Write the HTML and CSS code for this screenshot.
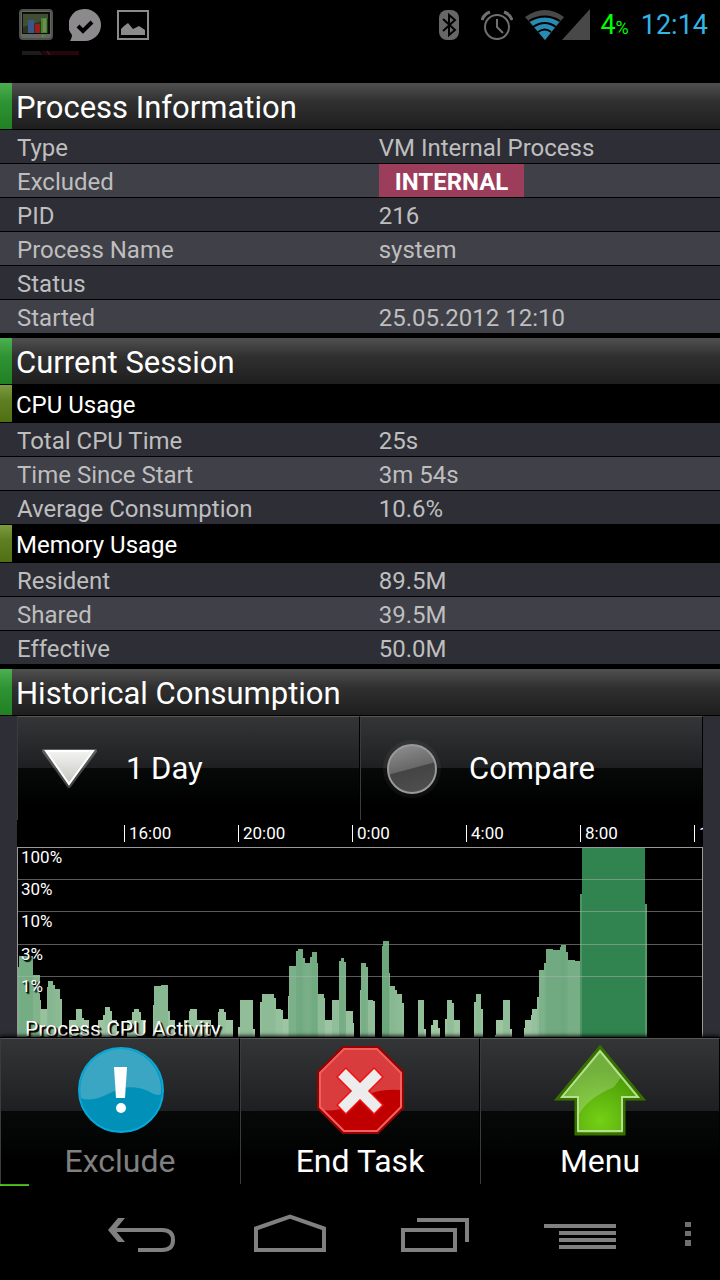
FILE: index.html
```
<!DOCTYPE html>
<html lang="en">
<head>
    <meta charset="UTF-8">
    <meta name="viewport" content="width=device-width, initial-scale=1.0">
    <title>Process Information</title>
    <link rel="stylesheet" href="styles.css">
</head>
<body>

    <header class="status-bar">
        <div class="status-icons">
            <svg width="34" height="32" viewBox="0 0 34 32">
                <rect x="1" y="1" width="32" height="29" rx="3" fill="#646662" stroke="#50524e" stroke-width="2"/>
                <rect x="3" y="3" width="28" height="22" fill="#0c0e0a"/>
                <path d="M4 5h25v19H4z" fill="#2c3424"/>
                <path d="M4 5h25v5L4 18z" fill="#424e34"/>
                <rect x="9" y="11" width="6" height="13" fill="#3a5788"/>
                <rect x="16" y="15" width="5" height="9" fill="#9c1c1c"/>
                <rect x="22" y="9" width="6" height="15" fill="#3f8a30"/>
                <rect x="24" y="10" width="3" height="13" fill="#6d8e50"/>
                <rect x="23" y="26" width="2" height="2" fill="#4f9a20"/>
            </svg>
            <svg width="32" height="32" viewBox="0 0 32 32">
                <path d="M16 0a16 16 0 1 1 0 32H1q2-3 2-6A16 16 0 0 1 16 0z" fill="#8c8a8c"/>
                <path d="M9 17l5 5 9-9" fill="none" stroke="#000" stroke-width="4"/>
            </svg>
            <svg width="32" height="32" viewBox="0 0 32 32">
                <rect x="1" y="2" width="30" height="28" fill="none" stroke="#8c8a8c" stroke-width="2"/>
                <path d="M4 26v-6l3-3 4-3 5 6 6-3 6 4v5z" fill="#8c8a8c"/>
            </svg>
        </div>
        <div class="status-info">
            <svg width="20" height="32" viewBox="0 0 20 32">
                <rect x="0" y="1" width="20" height="30" rx="8" fill="#666866"/>
                <path d="M4 10l12 11-6 5V6l6 5L4 22" fill="none" stroke="#000" stroke-width="2"/>
            </svg>
            <svg width="32" height="32" viewBox="0 0 32 32" fill="none" stroke="#707070" stroke-width="2">
                <circle cx="16" cy="18" r="12"/>
                <path d="M16 10v8l6 6"/>
                <path d="M1 11q2-6 8-8M31 11q-2-6-8-8" stroke-width="3"/>
            </svg>
            <svg width="66" height="32" viewBox="0 0 66 32">
                <path d="M0 8Q20-6 39 8L20 31z" fill="#484848"/>
                <path d="M5 13Q20 4 34 13L20 31z" fill="#268cb6"/>
                <path d="M4 12Q20 3 35 12M8 18Q20 10 31 18M13 23Q20 18 26 23" fill="none" stroke="#000" stroke-width="2"/>
                <path d="M37 31L65 0v31z" fill="#484848"/>
            </svg>
            <span class="battery">4<small>%</small></span>
            <span class="clock">12:14</span>
        </div>
    </header>

    <!-- leftover of the title bar that is sliding out -->
    <div class="title-bar">
        <svg width="58" height="6" viewBox="0 0 58 6">
            <path d="M0 1h18l3 4H0z" fill="#1c1c1c"/>
            <path d="M19 1h38v4H22z" fill="#26060a"/>
            <path d="M25 1l3 4" stroke="#333"/>
        </svg>
    </div>

    <main class="content">
        <section>
            <h2>Process Information</h2>
            <table>
                <tr><th scope="row">Type</th><td>VM Internal Process</td></tr>
                <tr><th scope="row">Excluded</th><td><span class="tag">INTERNAL</span></td></tr>
                <tr><th scope="row">PID</th><td>216</td></tr>
                <tr><th scope="row">Process Name</th><td>system</td></tr>
                <tr><th scope="row">Status</th><td></td></tr>
                <tr><th scope="row">Started</th><td>25.05.2012 12:10</td></tr>
            </table>
        </section>

        <section>
            <h2>Current Session</h2>
            <h3>CPU Usage</h3>
            <table>
                <tr><th scope="row">Total CPU Time</th><td>25s</td></tr>
                <tr><th scope="row">Time Since Start</th><td>3m 54s</td></tr>
                <tr><th scope="row">Average Consumption</th><td>10.6%</td></tr>
            </table>
            <h3>Memory Usage</h3>
            <table>
                <tr><th scope="row">Resident</th><td>89.5M</td></tr>
                <tr><th scope="row">Shared</th><td>39.5M</td></tr>
                <tr><th scope="row">Effective</th><td>50.0M</td></tr>
            </table>
        </section>

        <section>
            <h2>Historical Consumption</h2>
            <div class="history">
                <div class="toolbar">
                    <label class="tool" for="range">
                        <svg width="64" height="64" viewBox="0 0 64 64">
                            <defs>
                                <linearGradient id="tri" x1="0" y1="0" x2="0" y2="1">
                                    <stop offset="0" stop-color="#f4f4f2"/>
                                    <stop offset="1" stop-color="#c4c6be"/>
                                </linearGradient>
                            </defs>
                            <path d="M7 14h51L32 49z" fill="none" stroke="#fff" stroke-opacity=".25" stroke-width="4" stroke-linejoin="round"/>
                            <path d="M9 14h47L32 47z" fill="url(#tri)" stroke="#fff" stroke-width="2"/>
                        </svg>
                        <select id="range" aria-label="Time range">
                            <option>1 Day</option>
                        </select>
                    </label>
                    <label class="tool" for="compare">
                        <input type="checkbox" id="compare">
                        <span>Compare</span>
                    </label>
                </div>
                <div class="time-axis">
                    <span>16:00</span>
                    <span>20:00</span>
                    <span>0:00</span>
                    <span>4:00</span>
                    <span>8:00</span>
                    <span>12:00</span>
                </div>
                <div class="plot">
                    <svg id="bars" viewBox="18 1 684 189" preserveAspectRatio="none" shape-rendering="crispEdges"></svg>
                    <div class="scale">
                        <span>100%</span>
                        <span>30%</span>
                        <span>10%</span>
                        <span>3%</span>
                        <span>1%</span>
                    </div>
                    <div class="plot-title">Process CPU Activity</div>
                </div>
            </div>
        </section>
    </main>

    <footer class="actions">
        <button type="button" disabled>
            <svg width="96" height="96" viewBox="0 0 96 96">
                <circle cx="49" cy="48" r="42" fill="#0090b8" stroke="#08a8d6" stroke-width="2"/>
                <path d="M9 56A41 41 0 0 1 49 7a41 41 0 0 1 40 45Q86 55 76 49 58 41 40 50 20 61 9 56z" fill="#3aa6c4"/>
                <path d="M42 25h13l-2 31h-9z" fill="#fff"/>
                <circle cx="49" cy="66" r="5" fill="#fff"/>
            </svg>
            <span>Exclude</span>
        </button>
        <button type="button">
            <svg width="96" height="96" viewBox="0 0 96 96">
                <path d="M31 5h35l25 25v36L66 91H31L6 66V30z" fill="#c00000" stroke="#900" stroke-width="2"/>
                <path d="M32 7h33l24 24v17Q60 46 41 61 24 72 8 67V31z" fill="#d83c3c"/>
                <path d="M32 7h33l24 24v34L65 89H32L8 65V31z" fill="none" stroke="#f06060" stroke-width="2"/>
                <path d="M29 30l38 38M67 30L29 68" stroke="#f01010" stroke-width="14"/>
                <path d="M30 31l36 36M66 31L30 67" stroke="#ececec" stroke-width="11"/>
            </svg>
            <span>End Task</span>
        </button>
        <button type="button">
            <svg width="96" height="96" viewBox="0 0 96 96">
                <defs>
                    <radialGradient id="up" cx=".5" cy=".85" r=".6">
                        <stop offset="0" stop-color="#74d016"/>
                        <stop offset="1" stop-color="#4a9a06"/>
                    </radialGradient>
                </defs>
                <path d="M48 5L91 57H72v35H24V57H5z" fill="url(#up)" stroke="#387000" stroke-width="3"/>
                <path d="M48 9L13 54h14v18Q36 56 62 45L70 34z" fill="#fff" fill-opacity=".22"/>
                <path d="M48 9L86 55H70v34H26V55H10z" fill="none" stroke="#b4e090" stroke-width="2"/>
            </svg>
            <span>Menu</span>
        </button>
    </footer>

    <nav class="nav-bar">
        <div class="progress"></div>
        <button type="button" aria-label="Back">
            <svg width="96" height="96" viewBox="0 0 96 96">
                <path d="M12 46l10-12h7L19 46l10 12h-7z" fill="#808080"/>
                <path d="M15 46h51q11 0 11 10t-11 10H42" fill="none" stroke="#808080" stroke-width="4"/>
            </svg>
        </button>
        <button type="button" aria-label="Home">
            <svg width="96" height="96" viewBox="0 0 96 96">
                <path d="M14 44.5l34-12 34 12V66H14z" fill="none" stroke="#808080" stroke-width="4"/>
            </svg>
        </button>
        <button type="button" aria-label="Recent apps">
            <svg width="96" height="96" viewBox="0 0 96 96" fill="none" stroke="#808080" stroke-width="4">
                <rect x="15" y="46" width="52" height="20"/>
                <path d="M29 36h50v22"/>
            </svg>
        </button>
        <button type="button" aria-label="Menu drawer">
            <svg width="96" height="96" viewBox="0 0 96 96" fill="#808080">
                <path d="M10 40h72v4H10zM25 47h57v4H25zM25 54h57v4H25zM25 61h57v4H25z"/>
            </svg>
        </button>
        <button type="button" aria-label="More">
            <svg width="24" height="96" viewBox="0 0 24 96" fill="#707070">
                <path d="M9 38h6v5H9zM9 47h6v5H9zM9 56h6v6H9z"/>
            </svg>
        </button>
    </nav>

    <script src="chart.js"></script>
</body>
</html>
```
FILE: styles.css
```
* {
    box-sizing: border-box;
}

body {
    display: flex;
    flex-direction: column;
    height: 100vh;
    margin: 0;
    background-color: #000;
    color: #fff;
    font-family: Roboto, "Noto Sans", sans-serif;
    font-size: 24px;
}

svg {
    display: block;
    flex: none;
}

button,
select,
input {
    margin: 0;
    padding: 0;
    border: none;
    background: none;
    color: inherit;
    font: inherit;
}

/* Status bar */
.status-bar {
    display: flex;
    flex: none;
    justify-content: space-between;
    align-items: center;
    height: 50px;
    padding: 0 12px 0 19px;
}

.status-icons {
    display: flex;
    gap: 16px;
}

.status-info {
    display: flex;
    align-items: center;
}

.status-info svg {
    margin-right: 12px;
}

.status-info svg:first-child {
    margin-right: 22px;
}

.status-info svg:last-of-type {
    margin-right: 9px;
}

.battery {
    margin-right: 12px;
    color: #0f0;
    font-size: 27px;
}

.battery small {
    font-size: 18px;
}

.clock {
    color: #33b5e5;
    font-size: 27px;
}

.title-bar {
    flex: none;
    height: 33px;
    padding-left: 22px;
}

/* Content */
.content {
    flex: 1;
    min-height: 0;
    overflow: hidden;
}

section {
    margin-bottom: 4px;
}

h2,
h3 {
    margin: 0;
    padding-left: 16px;
    border-bottom: 1px solid #000;
    font-weight: 400;
}

h2 {
    height: 47px;
    background:
        linear-gradient(#4caf50, #2f9433 40%, #218024) 0 0 / 12px 46px no-repeat,
        linear-gradient(#505050, #303030 40%, #1e1e1e);
    font-size: 31px;
    line-height: 50px;
}

h3 {
    height: 38px;
    background: linear-gradient(#7d9c40, #607f22 40%, #4f7012) 0 0 / 12px 37px no-repeat;
    font-size: 24px;
    line-height: 40px;
}

table {
    width: 100%;
    border-collapse: collapse;
    table-layout: fixed;
    color: #bebebe;
}

tr {
    height: 34px;
    background-color: #2e2e36;
    box-shadow: inset 0 -1px #000;
}

tr:nth-child(even) {
    background-color: #404048;
}

th,
td {
    height: 34px;
    padding: 0;
    font-weight: 400;
    line-height: 34px;
    text-align: left;
    vertical-align: top;
}

th {
    width: 52.6%;
    padding-left: 17px;
}

/* text sits a little low in its row */
th,
td:not(:has(.tag)) {
    padding-top: 2px;
    line-height: 32px;
}

.tag {
    display: block;
    width: fit-content;
    height: 33px;
    padding: 1px 16px 0;
    background-color: #9c3d5c;
    color: #fff;
    font-weight: 700;
}

/* History chart */
.history {
    padding: 0 17px;
    background-color: #2e2e36;
}

.toolbar {
    display: grid;
    grid-template-columns: 1fr 1fr;
}

.tool,
.actions button {
    border-top: 1px solid #555658;
    border-left: 1px solid #3a3b3c;
    border-right: 1px solid #000;
    background: linear-gradient(#343537, #1e1f20 50%, #070909 50%, #000 85%);
    font-size: 31px;
}

.tool {
    display: flex;
    align-items: center;
    gap: 25px;
    height: 104px;
    padding-left: 19px;
}

.tool select {
    flex: 1;
    height: 48px;
    appearance: none;
}

.tool input {
    flex: none;
    width: 50px;
    height: 50px;
    margin: 0 7px;
    appearance: none;
    border: 2px solid #9a9a9a;
    border-radius: 50%;
    background: linear-gradient(165deg, #909090, #686868 48%, #444 50%, #505050);
    box-shadow: 0 0 0 4px #ffffff0c;
}

.time-axis {
    display: flex;
    align-items: center;
    height: 27px;
    padding-left: 15.6%;
    overflow: hidden;
    background-color: #000;
    font-size: 17px;
    line-height: 17px;
}

.time-axis span {
    flex: 0 0 114px;
    padding-left: 4px;
    border-left: 1px solid #fff;
}

.plot {
    position: relative;
    height: 190px;
    overflow: hidden;
    border: solid #999;
    border-width: 1px 1px 0;
    background-color: #000;
    text-shadow: 1px 1px 1px #000, 2px 2px 1px #000;
}

.plot svg {
    width: 100%;
    height: 100%;
}

/* percent labels and grid lines lie over the bars */
.scale {
    position: absolute;
    inset: 0;
    font-size: 17px;
    line-height: 18px;
}

.scale span {
    display: block;
    height: 32px;
    padding-left: 3px;
    border-bottom: 1px solid #b4b4b480;
}

.scale span:nth-child(3) {
    height: 33px;
}

.scale span:last-child {
    border-bottom: none;
}

.plot-title {
    position: absolute;
    left: 7px;
    bottom: -4px;
    font-size: 21px;
    line-height: 24px;
}

/* Bottom bars */
.actions {
    position: relative;
    display: grid;
    flex: none;
    grid-template-columns: repeat(3, 1fr);
    border-top: 1px solid #000;
    box-shadow: 0 -1px 4px #000;
}

.actions button {
    display: flex;
    flex-direction: column;
    align-items: center;
    height: 146px;
    padding-top: 3px;
    font-size: 32px;
    line-height: 46px;
}

.actions button:disabled {
    color: #808080;
}

.nav-bar {
    display: grid;
    flex: none;
    grid-template-columns: 71fr repeat(4, 146fr) 65fr;
    height: 96px;
}

.nav-bar button {
    display: flex;
    justify-content: center;
}

.progress {
    width: 29px;
    height: 2px;
    background-color: #5bdc1c;
}
```
FILE: chart.js
```
// start, end, height
var bars = [
    [18, 19, 70], [19, 33, 81], [33, 40, 62], [40, 41, 37], [41, 47, 28], [47, 48, 50],
    [48, 53, 56], [53, 55, 52], [55, 60, 48], [60, 62, 38], [69, 76, 17], [76, 82, 28],
    [82, 84, 19], [84, 89, 17], [98, 103, 17], [103, 105, 22], [105, 110, 30], [110, 112, 26],
    [112, 117, 17], [127, 132, 17], [132, 134, 25], [134, 139, 28], [139, 141, 25], [141, 146, 17],
    [153, 154, 32], [154, 161, 51], [161, 168, 52], [168, 170, 26], [170, 175, 17], [184, 189, 17],
    [189, 190, 26], [190, 197, 28], [197, 211, 17], [218, 219, 25], [219, 224, 28], [224, 226, 25],
    [226, 233, 17], [238, 240, 10], [240, 253, 37], [253, 255, 8], [260, 262, 35], [262, 274, 43],
    [274, 276, 39], [276, 281, 28], [281, 283, 27], [283, 288, 18], [288, 289, 41], [289, 296, 71],
    [296, 298, 86], [298, 303, 88], [303, 305, 79], [305, 310, 74], [310, 312, 80], [312, 317, 85],
    [317, 318, 74], [318, 324, 43], [324, 325, 39], [325, 332, 17], [332, 339, 37], [339, 341, 76],
    [341, 344, 79], [344, 346, 75], [346, 353, 26], [353, 354, 14], [360, 361, 47], [361, 366, 74],
    [366, 368, 70], [368, 373, 37], [373, 375, 36], [382, 383, 91], [383, 389, 96], [389, 390, 64],
    [390, 395, 51], [395, 397, 47], [397, 402, 43], [402, 404, 34], [418, 424, 37], [424, 426, 8],
    [431, 433, 12], [433, 438, 17], [438, 440, 9], [445, 447, 18], [447, 452, 37], [452, 454, 34],
    [454, 460, 17], [474, 476, 35], [476, 481, 43], [481, 483, 28], [495, 496, 2], [496, 503, 17],
    [503, 510, 37], [510, 512, 8], [524, 525, 9], [525, 531, 17], [531, 532, 22], [532, 537, 28],
    [537, 539, 40], [539, 544, 67], [544, 546, 74], [546, 553, 88], [553, 560, 87], [560, 561, 90],
    [561, 566, 92], [566, 568, 85], [568, 575, 77], [575, 580, 76], [580, 582, 143], [582, 645, 190],
    [645, 647, 133]
];

// Taller bars get a darker green
function barColor(height) {
    var t = (height - 17) / 173;
    return 'rgb(' + Math.round(157 - 108 * t) + ',' + Math.round(197 - 66 * t) + ',' + Math.round(162 - 83 * t) + ')';
}

var svg = document.getElementById('bars');
bars.forEach(function (bar) {
    var rect = document.createElementNS('http://www.w3.org/2000/svg', 'rect');
    rect.setAttribute('x', bar[0]);
    rect.setAttribute('y', 190 - bar[2]);
    rect.setAttribute('width', bar[1] - bar[0]);
    rect.setAttribute('height', bar[2]);
    rect.setAttribute('fill', barColor(bar[2]));
    svg.appendChild(rect);
});
```
